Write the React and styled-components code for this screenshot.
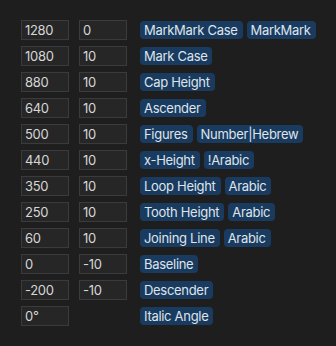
import React from "react";
import styled, { createGlobalStyle } from "styled-components";

const Global = createGlobalStyle`
  html, body { margin: 0; padding: 0; background: #1e1e1e; }
  body { font-family: Inter, "Liberation Sans", sans-serif; }
`;

const Panel = styled.div`
  width: 336px;
  height: 346px;
  box-sizing: border-box;
  padding: 20px 21px;
  background: #1e1e1e;
  display: flex;
  flex-direction: column;
  gap: 6px;
`;

const Row = styled.div`
  display: grid;
  grid-template-columns: 48px 48px 1fr;
  column-gap: 10px;
  align-items: center;
  height: 20px;
`;

const Field = styled.div`
  box-sizing: border-box;
  height: 20px;
  width: 48px;
  background: #262626;
  border: 1px solid #3b3b3b;
  color: #d6d6d6;
  font-size: 13px;
  letter-spacing: -0.3px;
  line-height: 19px;
  padding: 0 3px;
  grid-column: ${(p) => p.$col};
`;

const Tags = styled.div`
  grid-column: 3;
  margin-left: 3px;
  display: flex;
  gap: 4px;
`;

const Tag = styled.span`
  height: 18px;
  line-height: 18px;
  padding: 0 5px 0 4px;
  border-radius: 4px;
  background: #1a3b60;
  color: #dfe4ea;
  font-size: 13px;
  letter-spacing: -0.3px;
  white-space: nowrap;
`;

const rows = [
  ["1280", "0", ["MarkMark Case", "MarkMark"]],
  ["1080", "10", ["Mark Case"]],
  ["880", "10", ["Cap Height"]],
  ["640", "10", ["Ascender"]],
  ["500", "10", ["Figures", "Number|Hebrew"]],
  ["440", "10", ["x-Height", "!Arabic"]],
  ["350", "10", ["Loop Height", "Arabic"]],
  ["250", "10", ["Tooth Height", "Arabic"]],
  ["60", "10", ["Joining Line", "Arabic"]],
  ["0", "-10", ["Baseline"]],
  ["-200", "-10", ["Descender"]],
  ["0°", null, ["Italic Angle"]],
];

export default function App() {
  return (
    <>
      <Global />
      <Panel>
        {rows.map(([a, b, tags], i) => (
          <Row key={i}>
            <Field $col={1}>{a}</Field>
            {b !== null && <Field $col={2}>{b}</Field>}
            <Tags>
              {tags.map((t) => (
                <Tag key={t}>{t}</Tag>
              ))}
            </Tags>
          </Row>
        ))}
      </Panel>
    </>
  );
}
